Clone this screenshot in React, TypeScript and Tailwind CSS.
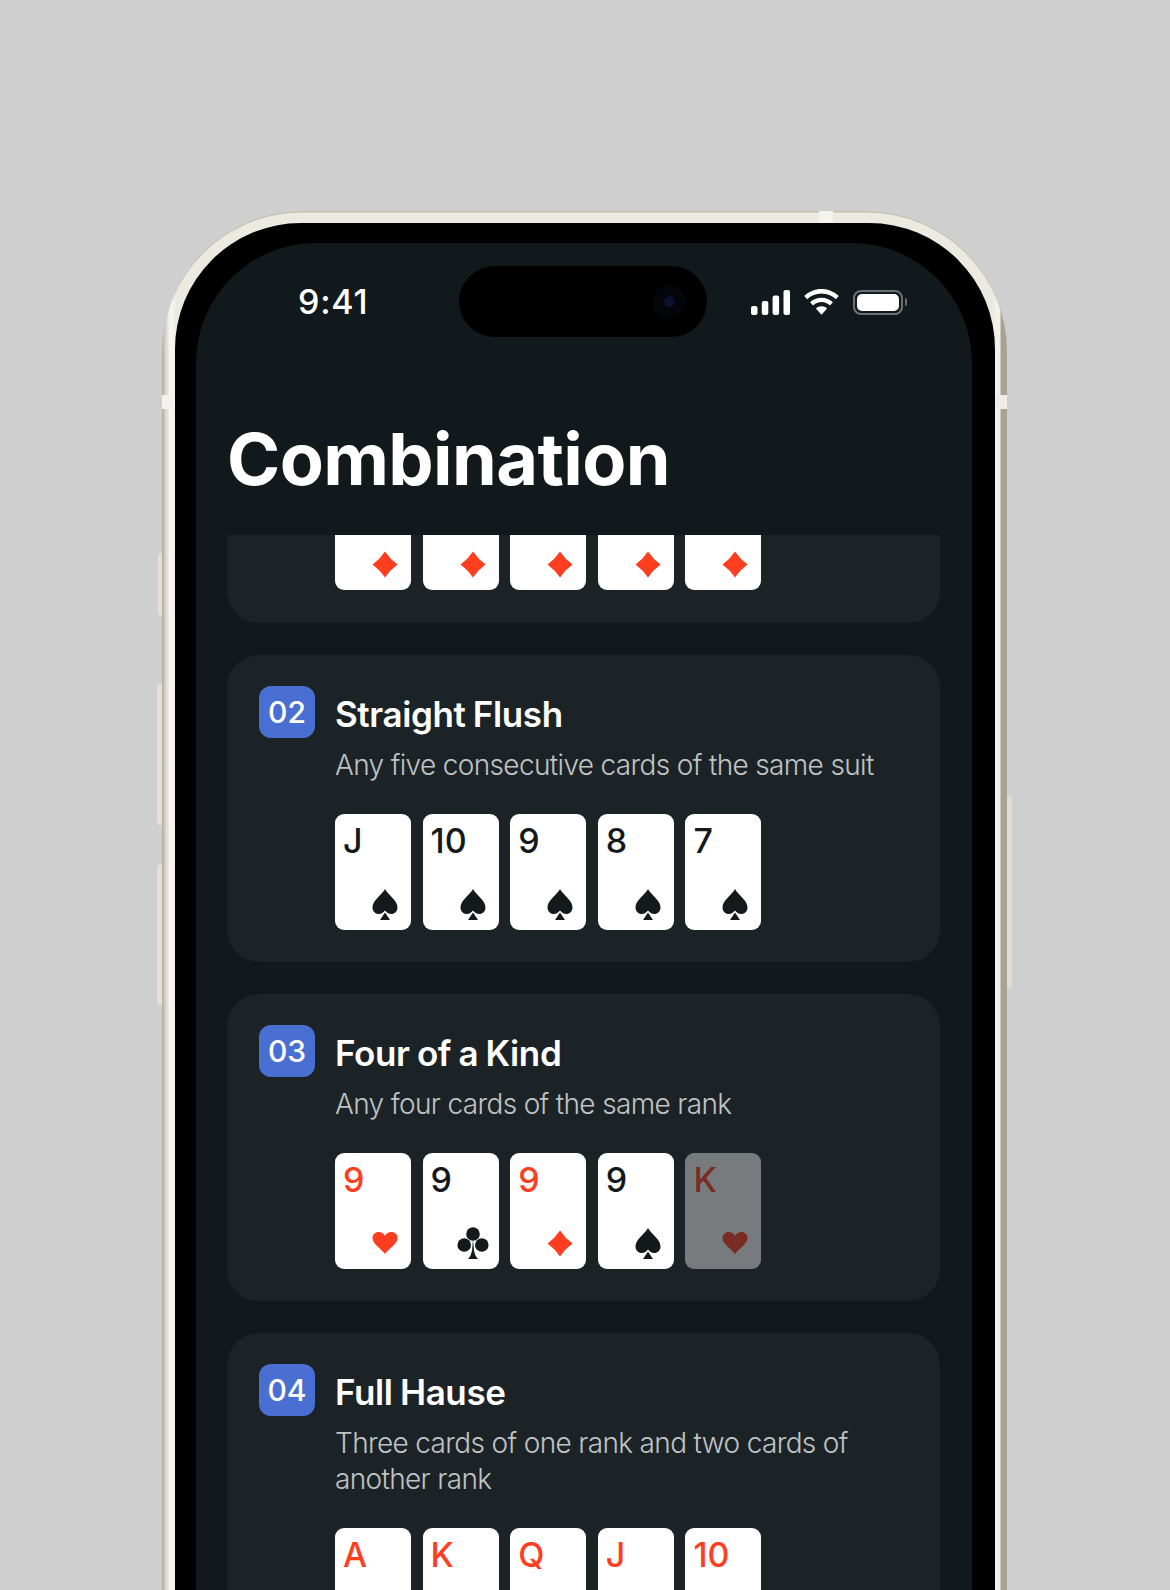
type Suit = 'spade' | 'heart' | 'diamond' | 'club'

type PlayingCard = {
  rank: string
  suit: Suit
  dimmed?: boolean
}

const RED_SUITS: Suit[] = ['heart', 'diamond']

function SuitIcon({ suit }: { suit: Suit }) {
  return (
    <svg viewBox="0 0 32 32" className="size-8 fill-current" aria-hidden>
      {suit === 'diamond' && (
        <path d="M16 3.5Q21 11 28.5 16.5 21 22 16 29.5 11 22 3.5 16.5 11 11 16 3.5Z" />
      )}
      {suit === 'heart' && (
        <path d="M16 27C12 21.5 3.5 17 3.5 11 3.5 7.5 6.2 5 9.5 5 12.3 5 14.8 6.5 16 9 17.2 6.5 19.7 5 22.5 5 25.8 5 28.5 7.5 28.5 11 28.5 17 20 21.5 16 27Z" />
      )}
      {suit === 'spade' && (
        <>
          <path d="M16 1C19 7 28.5 12 28.5 19.5 28.5 23.5 25.5 26 22.3 26 20 26 18 25 16 22.5 14 25 12 26 9.7 26 6.5 26 3.5 23.5 3.5 19.5 3.5 12 13 7 16 1Z" />
          <path d="M16 24.5 21 32H11Z" />
        </>
      )}
      {suit === 'club' && (
        <>
          <circle cx="16" cy="7" r="6.8" />
          <circle cx="7.2" cy="18" r="6.8" />
          <circle cx="24.8" cy="18" r="6.8" />
          <path d="M16 12 17 24Q18 29 21 32H11Q14 29 15 24Z" />
        </>
      )}
    </svg>
  )
}

function CardFace({ rank, suit, dimmed }: PlayingCard) {
  const red = RED_SUITS.includes(suit)

  return (
    <div
      className={`flex h-[116px] w-[76px] flex-col justify-between rounded-[9px] bg-white pt-[6px] pr-[10px] pb-[10px] pl-[8px] ${
        red ? 'text-[#ff3d1f]' : 'text-[#14191c]'
      } ${dimmed ? 'opacity-40' : ''}`}
    >
      <span className="text-[34px] leading-[42px] font-medium">{rank}</span>
      <div className="self-end">
        <SuitIcon suit={suit} />
      </div>
    </div>
  )
}

function CardRow({ cards }: { cards: PlayingCard[] }) {
  return (
    <div className="flex gap-[11.6px]">
      {cards.map((card, i) => (
        <CardFace key={i} {...card} />
      ))}
    </div>
  )
}

function CombinationPanel({
  number,
  title,
  description,
  cards,
}: {
  number: string
  title: string
  description: string
  cards: PlayingCard[]
}) {
  return (
    <section className="flex gap-5 rounded-[32px] bg-[#1c2327] pt-[31px] pr-8 pb-8 pl-8">
      <div className="flex h-[52px] w-14 shrink-0 items-center justify-center rounded-xl bg-[#4a6fd3] text-[30px] font-medium text-white">
        {number}
      </div>
      <div className="min-w-0 flex-1">
        <h2 className="mt-[6px] text-[35px] leading-[44px] font-semibold tracking-[-0.4px] text-white [word-spacing:-1px]">
          {title}
        </h2>
        <p className="mt-[11px] text-[28px] leading-9 font-light tracking-[-0.65px] text-[#c0c3c4]">
          {description}
        </p>
        <div className="mt-[31px]">
          <CardRow cards={cards} />
        </div>
      </div>
    </section>
  )
}

// only the bottom of the first panel shows under the header
function ClippedPanel() {
  return (
    <section className="flex gap-[11.6px] rounded-b-[32px] bg-[#1c2327] pb-[33px] pl-[108px]">
      {[0, 1, 2, 3, 4].map((i) => (
        <div
          key={i}
          className="flex h-[55px] w-[76px] items-end justify-end rounded-b-[9px] bg-white pr-[10px] pb-[10px] text-[#ff3d1f]"
        >
          <SuitIcon suit="diamond" />
        </div>
      ))}
    </section>
  )
}

function StatusIcons() {
  return (
    <div className="flex items-center gap-[14px]">
      <svg viewBox="0 0 39 25" className="h-[25px] w-[39px] fill-white" aria-hidden>
        <rect x="0" y="16" width="6.5" height="9" rx="2" />
        <rect x="10.8" y="11" width="6.5" height="14" rx="2" />
        <rect x="21.6" y="5.5" width="6.5" height="19.5" rx="2" />
        <rect x="32.5" y="0" width="6.5" height="25" rx="2" />
      </svg>
      <svg viewBox="0 0 35 26" className="h-[26px] w-[35px] fill-white" aria-hidden>
        <path d="M17.5 0C24.2 0 30.3 2.7 34.8 7L31.8 10.2C28.1 6.7 23 4.5 17.5 4.5S6.9 6.7 3.2 10.2L.2 7C4.7 2.7 10.8 0 17.5 0Z" />
        <path d="M17.5 8.7C21.9 8.7 25.9 10.4 28.9 13.2L25.9 16.4C23.7 14.4 20.7 13.1 17.5 13.1S11.3 14.4 9.1 16.4L6.1 13.2C9.1 10.4 13.1 8.7 17.5 8.7Z" />
        <path d="M17.5 17.3C19.7 17.3 21.6 18.1 23.1 19.5L17.5 25.7 11.9 19.5C13.4 18.1 15.3 17.3 17.5 17.3Z" />
      </svg>
      <div className="flex items-center gap-[2px]">
        <div className="h-[25px] w-[50px] rounded-[8px] border-2 border-[#6b7175] p-[2px]">
          <div className="h-full w-full rounded-[5px] bg-white" />
        </div>
        <div className="h-[8px] w-[2.5px] rounded-r-full bg-[#6b7175]" />
      </div>
    </div>
  )
}

const ROWS: { number: string; title: string; description: string; cards: PlayingCard[] }[] = [
  {
    number: '02',
    title: 'Straight Flush',
    description: 'Any five consecutive cards of the same suit',
    cards: [
      { rank: 'J', suit: 'spade' },
      { rank: '10', suit: 'spade' },
      { rank: '9', suit: 'spade' },
      { rank: '8', suit: 'spade' },
      { rank: '7', suit: 'spade' },
    ],
  },
  {
    number: '03',
    title: 'Four of a Kind',
    description: 'Any four cards of the same rank',
    cards: [
      { rank: '9', suit: 'heart' },
      { rank: '9', suit: 'club' },
      { rank: '9', suit: 'diamond' },
      { rank: '9', suit: 'spade' },
      { rank: 'K', suit: 'heart', dimmed: true },
    ],
  },
  {
    number: '04',
    title: 'Full Hause',
    description: 'Three cards of one rank and two cards of another rank',
    cards: [
      { rank: 'A', suit: 'heart' },
      { rank: 'K', suit: 'heart' },
      { rank: 'Q', suit: 'heart' },
      { rank: 'J', suit: 'heart' },
      { rank: '10', suit: 'heart' },
    ],
  },
]

export default function App() {
  return (
    <div className="h-[1590px] overflow-hidden bg-[#cfcfcf] pt-[211px] pl-[162px] font-['Inter',sans-serif]">
      <div className="relative w-[845px]">
        {/* side buttons */}
        <div className="absolute top-[342px] -left-1 h-[63px] w-1 rounded-l-sm bg-[#e6e1d6]" />
        <div className="absolute top-[473px] -left-[5px] h-[141px] w-[5px] rounded-l-sm bg-[#e6e1d6]" />
        <div className="absolute top-[653px] -left-[5px] h-[141px] w-[5px] rounded-l-sm bg-[#e6e1d6]" />
        <div className="absolute top-[585px] -right-[5px] h-[192px] w-[5px] rounded-r-sm bg-[#e3ddd0]" />

        <div className="relative rounded-t-[140px] bg-[linear-gradient(to_right,#aaa599_0px,#c9c5bb_2px,#f8f6f1_8px,#f4f1ea_12px,#ece9e0_14px,#ece9e0_831px,#f4f1eb_834px,#f4f1eb_838px,#a8a295_839px,#a8a295_845px)] pt-3 pr-3 pl-[13px] shadow-[inset_0_1.5px_0_#c4bfb3]">
          {/* antenna bands */}
          <div className="absolute top-0 left-[657px] h-3 w-[14px] bg-[#f5f3ed]" />
          <div className="absolute top-[184px] left-0 h-[14px] w-[13px] bg-[#f5f3ed]" />
          <div className="absolute top-[184px] right-0 h-[14px] w-[13px] bg-[#f0ede6]" />

          <div className="relative rounded-t-[126px] bg-black pt-5 pr-[23px] pl-[21px]">
            {/* dynamic island */}
            <div className="absolute top-[43px] left-[284px] flex h-[71px] w-[248px] items-center justify-end rounded-full bg-black pr-[21px]">
              <div className="flex size-[34px] items-center justify-center rounded-full bg-[#04050a]">
                <div className="size-[11px] rounded-full bg-[#0c1030]" />
              </div>
            </div>

            <div className="h-[1400px] rounded-t-[120px] bg-[#12191c]">
              <div className="flex h-[118px] items-center justify-between pr-[65px] pl-[102px]">
                <span className="text-[34px] leading-none font-medium tracking-[0.8px] text-white">
                  9:41
                </span>
                <StatusIcons />
              </div>

              <h1 className="h-[174px] px-[31px] pt-[56px] text-[72px] leading-[84px] font-bold tracking-[-0.6px] text-white">
                Combination
              </h1>

              <div className="flex flex-col gap-8 pr-8 pl-[31px]">
                <ClippedPanel />
                {ROWS.map((row) => (
                  <CombinationPanel key={row.number} {...row} />
                ))}
              </div>
            </div>
          </div>
        </div>
      </div>
    </div>
  )
}
